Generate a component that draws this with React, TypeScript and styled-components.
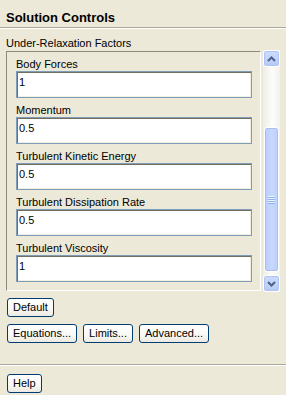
import React from "react";
import styled, { createGlobalStyle } from "styled-components";

const Global = createGlobalStyle`
  html, body { margin: 0; padding: 0; }
  body {
    background: #ece9d8;
    font-family: "Liberation Sans", Arial, sans-serif;
    font-size: 11px;
    color: #000;
    width: 286px;
    height: 395px;
    overflow: hidden;
  }
`;

const Page = styled.div`
  width: 286px;
  height: 395px;
  display: flex;
  flex-direction: column;
  background: #ece9d8;
`;

const Title = styled.div`
  box-sizing: border-box;
  height: 27px;
  padding: 10px 0 0 6px;
  font-size: 13px;
  font-weight: bold;
  line-height: 15px;
`;

const Separator = styled.div<{ $mt?: number }>`
  height: 1px;
  margin-top: ${(p) => p.$mt ?? 0}px;
  background: #aca899;
  border-bottom: 1px solid #ffffff;
`;

const GroupLabel = styled.div`
  box-sizing: border-box;
  height: 21px;
  padding: 8px 0 0 6px;
  line-height: 13px;
`;

const ScrollRow = styled.div`
  display: flex;
  align-items: center;
  height: 242px;
  padding-left: 6px;
  gap: 2px;
`;

const Panel = styled.div`
  box-sizing: border-box;
  width: 255px;
  height: 240px;
  border-style: solid;
  border-width: 1px;
  border-color: #8e8b7e #ffffff #ffffff #8e8b7e;
  padding: 0 8px 0 9px;
  overflow: hidden;
`;

const Field = styled.div`
  display: flex;
  flex-direction: column;
`;

const FieldLabel = styled.div`
  box-sizing: border-box;
  height: 19px;
  padding-top: 5px;
  line-height: 14px;
  white-space: nowrap;
`;

const Input = styled.div`
  box-sizing: border-box;
  height: 27px;
  border: 1px solid #7f9db9;
  background: #ffffff;
  box-shadow: inset 1px 1px 0 #716f64, inset -1px -1px 0 #f1efe2;
  padding: 4px 0 0 2px;
  line-height: 13px;
`;

const ScrollBar = styled.div`
  width: 17px;
  height: 242px;
  display: flex;
  flex-direction: column;
  background: linear-gradient(90deg, #eeede5 0%, #fdfdfb 55%, #f3f1ec 100%);
`;

const ArrowButton = styled.div`
  box-sizing: border-box;
  width: 17px;
  height: 17px;
  border: 1px solid #ffffff;
  border-radius: 3px;
  background: linear-gradient(180deg, #cddbfc 0%, #c1d3fb 60%, #b4c8f6 100%);
  box-shadow: inset 0 0 0 1px #b0c4f4;
  display: flex;
  align-items: center;
  justify-content: center;
`;

const Track = styled.div`
  flex: 1;
  display: flex;
  flex-direction: column;
`;

const Thumb = styled.div`
  box-sizing: border-box;
  margin: 60px 1px 0 1px;
  height: 145px;
  border: 1px solid #ffffff;
  border-radius: 3px;
  background: linear-gradient(90deg, #b9cdfb 0%, #c8d8fd 50%, #bccffb 100%);
  box-shadow: inset 0 0 0 1px #a9bff3;
  display: flex;
  align-items: center;
  justify-content: center;
`;

const Grip = styled.div`
  display: flex;
  flex-direction: column;
  gap: 1px;
`;

const GripLine = styled.div`
  width: 7px;
  height: 1px;
  background: #eef4fe;
  box-shadow: 0 1px 0 #8cb0f8;
`;

const Buttons = styled.div<{ $mt: number }>`
  display: flex;
  gap: 6px;
  padding-left: 7px;
  margin-top: ${(p) => p.$mt}px;
`;

const Button = styled.button`
  box-sizing: border-box;
  height: 19px;
  padding: 0 5px;
  border: 1px solid #003c74;
  border-radius: 3px;
  background: linear-gradient(180deg, #ffffff 0%, #f9f9f6 55%, #ece9e0 100%);
  font-family: "Liberation Sans", Arial, sans-serif;
  font-size: 11px;
  line-height: 15px;
  color: #000;
`;

const Chevron = ({ up }: { up?: boolean }) => (
  <svg width="9" height="6" viewBox="0 0 9 6">
    <path
      d={up ? "M1 5 L4.5 1.5 L8 5" : "M1 1 L4.5 4.5 L8 1"}
      fill="none"
      stroke="#4d6185"
      strokeWidth="2"
    />
  </svg>
);

const fields = [
  { label: "Body Forces", value: "1" },
  { label: "Momentum", value: "0.5" },
  { label: "Turbulent Kinetic Energy", value: "0.5" },
  { label: "Turbulent Dissipation Rate", value: "0.5" },
  { label: "Turbulent Viscosity", value: "1" },
];

export default function App() {
  return (
    <Page>
      <Global />
      <Title>Solution Controls</Title>
      <Separator />
      <GroupLabel>Under-Relaxation Factors</GroupLabel>
      <ScrollRow>
        <Panel>
          {fields.map((f) => (
            <Field key={f.label}>
              <FieldLabel>{f.label}</FieldLabel>
              <Input>{f.value}</Input>
            </Field>
          ))}
        </Panel>
        <ScrollBar>
          <ArrowButton>
            <Chevron up />
          </ArrowButton>
          <Track>
            <Thumb>
              <Grip>
                <GripLine />
                <GripLine />
                <GripLine />
                <GripLine />
              </Grip>
            </Thumb>
          </Track>
          <ArrowButton>
            <Chevron />
          </ArrowButton>
        </ScrollBar>
      </ScrollRow>
      <Buttons $mt={6}>
        <Button>Default</Button>
      </Buttons>
      <Buttons $mt={7}>
        <Button>Equations...</Button>
        <Button>Limits...</Button>
        <Button>Advanced...</Button>
      </Buttons>
      <Separator $mt={21} />
      <Buttons $mt={8}>
        <Button>Help</Button>
      </Buttons>
    </Page>
  );
}
